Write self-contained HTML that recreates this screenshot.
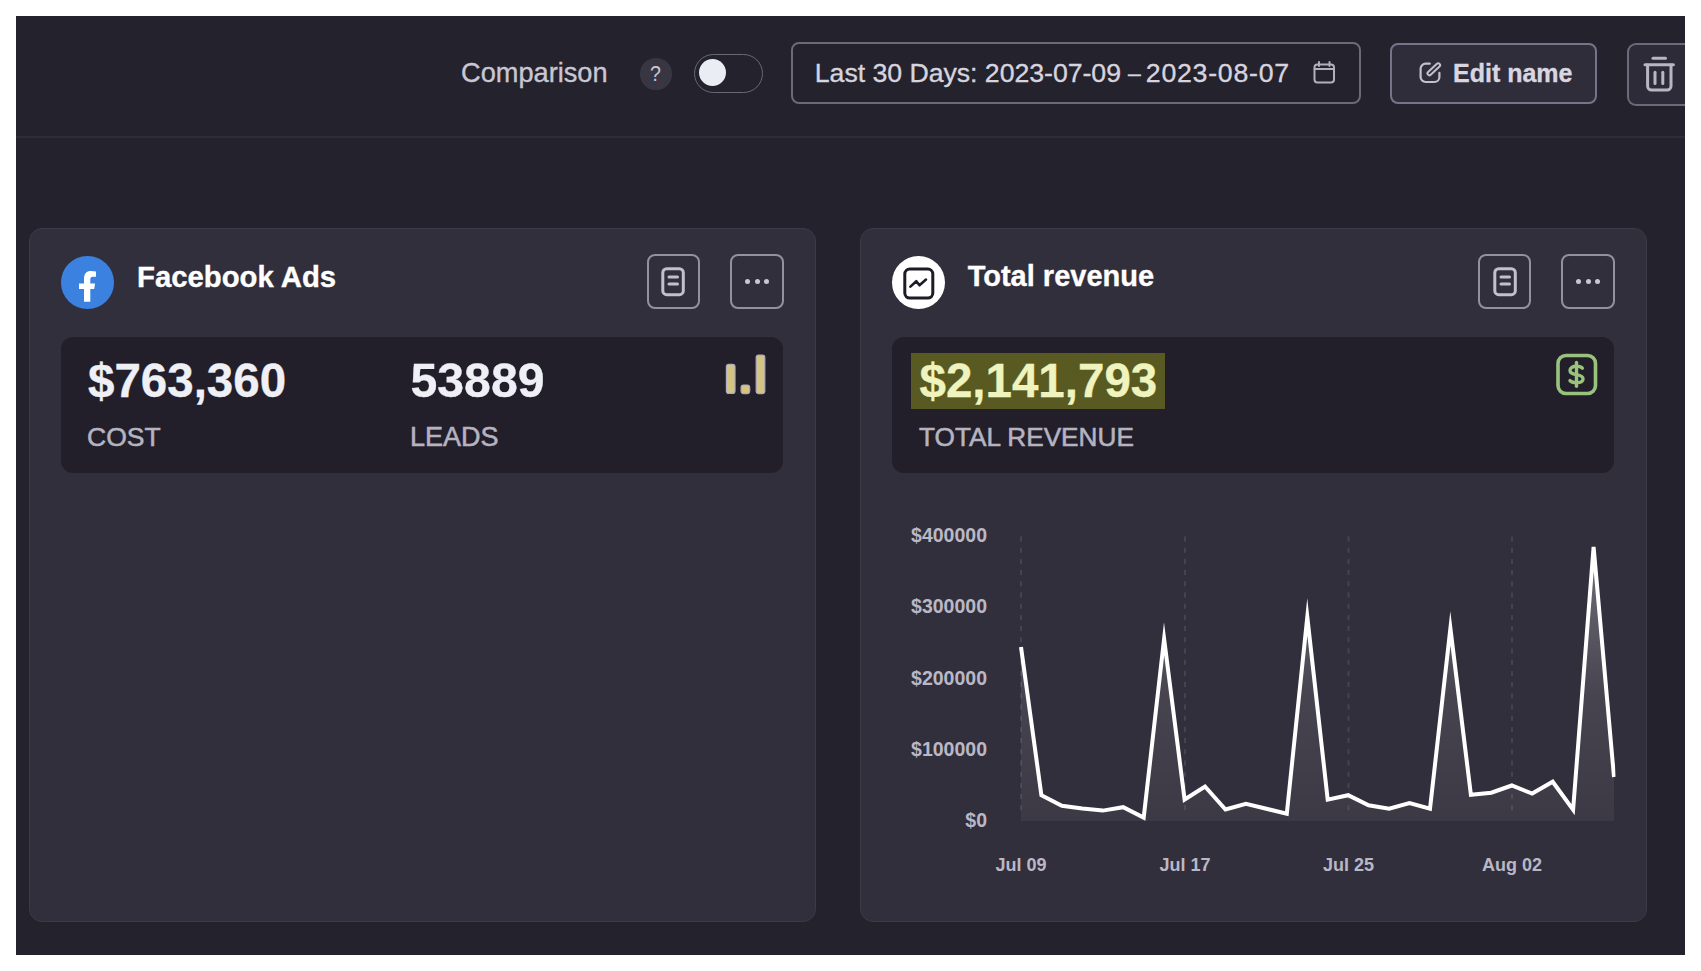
<!DOCTYPE html>
<html><head><meta charset="utf-8">
<style>
html,body{margin:0;padding:0;background:#ffffff;width:1701px;height:971px;overflow:hidden;position:relative;font-family:"Liberation Sans",sans-serif;}
.abs{position:absolute;}
#bg{position:absolute;left:16px;top:16px;width:1669px;height:939px;background:#24222d;overflow:hidden;}
.hline{position:absolute;left:16px;top:136px;width:1669px;height:2px;background:#2f2c39;}
.t{position:absolute;white-space:nowrap;line-height:1;-webkit-text-stroke:0.35px currentColor;}
.btn{position:absolute;box-sizing:border-box;border:2px solid #6c6978;border-radius:8px;}
.card{position:absolute;box-sizing:border-box;background:#322f3c;border:1px solid #3d3a48;border-radius:13px;}
.stats{position:absolute;background:#221f2a;border-radius:12px;}
.ibtn{position:absolute;box-sizing:border-box;border:2px solid #9390a0;border-radius:8px;}
</style></head>
<body>
<div id="bg"></div>
<div class="hline"></div>

<!-- header -->
<div class="t" style="left:461px;top:59.2px;font-size:27.2px;color:#c9c7d3;">Comparison</div>
<div class="abs" style="left:640px;top:58px;width:31.5px;height:31.5px;border-radius:50%;background:#393644;"></div>
<div class="t" style="left:650.1px;top:63px;font-size:22.5px;color:#c9c7d3;-webkit-text-stroke:0;transform:scaleX(0.87);transform-origin:0 0;">?</div>
<div class="abs" style="left:694px;top:54px;width:69px;height:39px;box-sizing:border-box;border:1.6px solid #6a6776;border-radius:20px;"></div>
<div class="abs" style="left:699px;top:59px;width:27px;height:27px;border-radius:50%;background:#ebedf5;"></div>

<div class="btn" style="left:791px;top:42px;width:570px;height:61.5px;"></div>
<div class="t" style="left:814.8px;top:59.8px;font-size:26.7px;letter-spacing:-0.04px;color:#d6d4df;">Last 30 Days: 2023-07-09</div>
<div class="t" style="left:1128px;top:61.5px;font-size:23px;color:#d6d4df;">–</div>
<div class="t" style="left:1145.8px;top:59.8px;font-size:26.7px;letter-spacing:0.75px;color:#d6d4df;">2023-08-07</div>
<svg class="abs" style="left:1312px;top:60px;" width="26" height="26" viewBox="0 0 26 26" fill="none" stroke="#b3b0be" stroke-width="2" stroke-linecap="round">
 <rect x="2.5" y="4.5" width="19.5" height="18" rx="3"/>
 <line x1="2.5" y1="9" x2="22" y2="9"/>
 <line x1="7" y1="2" x2="7" y2="6"/>
 <line x1="17.5" y1="2" x2="17.5" y2="6"/>
</svg>

<div class="btn" style="left:1390px;top:42.5px;width:207px;height:61px;background:#302d3a;border-color:#77748a;"></div>
<svg class="abs" style="left:1417px;top:60px;" width="26" height="26" viewBox="0 0 26 26" fill="none" stroke="#c3c0cd" stroke-width="2.2" stroke-linecap="round" stroke-linejoin="round">
 <path d="M12.8 3.7 H8.6 A5 5 0 0 0 3.6 8.7 V17 A5 5 0 0 0 8.6 22 H17.4 A5 5 0 0 0 22.4 17 V12.8"/>
 <rect x="-7.9" y="-1.9" width="15.8" height="3.8" rx="1.9" stroke-width="2" transform="translate(16.8 9.3) rotate(-43)"/>
</svg>
<div class="t" style="left:1453px;top:60.7px;font-size:25px;font-weight:bold;color:#d8d6e1;">Edit name</div>

<div class="abs" style="left:1627px;top:43px;width:58px;height:62.5px;box-sizing:border-box;border:2px solid #6c6978;border-right:none;border-radius:9px 0 0 9px;background:#2e2b38;"></div>
<svg class="abs" style="left:1640px;top:54px;" width="38" height="40" viewBox="0 0 38 40" fill="none" stroke="#b9b6c4" stroke-width="3" stroke-linecap="round" stroke-linejoin="round">
 <line x1="13" y1="4.2" x2="25.5" y2="4.2"/>
 <line x1="5" y1="10.7" x2="33.4" y2="10.7"/>
 <path d="M7.6 11 V32 A4 4 0 0 0 11.6 36 H27 A4 4 0 0 0 31 32 V11"/>
 <line x1="15" y1="18.3" x2="15" y2="29.5"/>
 <line x1="22.8" y1="18.3" x2="22.8" y2="29.5"/>
</svg>

<!-- left card -->
<div class="card" style="left:29px;top:228px;width:787px;height:694px;"></div>
<div class="abs" style="left:61px;top:256px;width:52.5px;height:52.5px;border-radius:50%;background:#3b82e0;"></div>
<svg class="abs" style="left:61px;top:256px;" width="53" height="53" viewBox="0 0 53 53">
 <path fill="#ffffff" d="M23 45.7 V33 H18 V27.6 H23 V23 C23 17.5 25.5 14.9 30 14.9 C32 14.9 33.5 15.1 35 15.4 V20.8 H32 C30 20.8 29.3 21.8 29.3 23.5 V27.6 H34 L33.2 33 H29.3 V45.7 Z"/>
</svg>
<div class="t" style="left:137px;top:262.1px;font-size:29.3px;font-weight:bold;color:#ffffff;">Facebook Ads</div>

<div class="ibtn" style="left:646.5px;top:254px;width:53px;height:54.5px;"></div>
<svg class="abs" style="left:655px;top:263px;" width="36" height="36" viewBox="0 0 36 36" fill="none" stroke="#c3c0cd" stroke-width="3" stroke-linecap="round">
 <rect x="7.8" y="5.7" width="20.5" height="26" rx="4"/>
 <line x1="14" y1="14" x2="22.5" y2="14"/>
 <line x1="14" y1="21" x2="22.5" y2="21"/>
</svg>
<div class="ibtn" style="left:730px;top:254px;width:54px;height:54.5px;"></div>
<div class="abs" style="left:745px;top:279.2px;width:5px;height:5px;border-radius:50%;background:#c9c7d3;"></div>
<div class="abs" style="left:754.5px;top:279.2px;width:5px;height:5px;border-radius:50%;background:#c9c7d3;"></div>
<div class="abs" style="left:764px;top:279.2px;width:5px;height:5px;border-radius:50%;background:#c9c7d3;"></div>

<div class="stats" style="left:61px;top:336.5px;width:721.5px;height:136px;"></div>
<div class="t" style="left:88px;top:357px;font-size:47.5px;font-weight:bold;color:#eef0f6;">$763,360</div>
<div class="t" style="left:410.5px;top:355.8px;font-size:48.2px;font-weight:bold;color:#eef0f6;">53889</div>
<div class="t" style="left:87px;top:423.6px;font-size:26.5px;color:#b6b3c1;-webkit-text-stroke:0.55px #b6b3c1;">COST</div>
<div class="t" style="left:410px;top:423.9px;font-size:27px;color:#b6b3c1;-webkit-text-stroke:0.55px #b6b3c1;">LEADS</div>
<svg class="abs" style="left:720px;top:350px;" width="50" height="50" viewBox="0 0 50 50">
 <g fill="#d4c481" stroke="#aeadc0" stroke-width="1.2">
  <rect x="6.4" y="14.4" width="8.6" height="29" rx="2.5"/>
  <rect x="21.1" y="35" width="8.6" height="8.6" rx="2.5"/>
  <rect x="36.2" y="5.1" width="8.6" height="38.5" rx="2.5"/>
 </g>
</svg>

<!-- right card -->
<div class="card" style="left:860px;top:228px;width:787px;height:694px;"></div>
<div class="abs" style="left:892px;top:255.5px;width:53px;height:53px;border-radius:50%;background:#ffffff;"></div>
<svg class="abs" style="left:892px;top:255.5px;" width="53" height="53" viewBox="0 0 53 53" fill="none" stroke="#1d1b24" stroke-width="3" stroke-linecap="round" stroke-linejoin="round">
 <rect x="12.8" y="13.1" width="28" height="29" rx="5"/>
 <path stroke-width="2.6" d="M18.4 30.6 L24.3 25.2 L27.5 29.3 L34 23.6"/>
</svg>
<div class="t" style="left:967.7px;top:262.4px;font-size:29px;font-weight:bold;color:#ffffff;">Total revenue</div>

<div class="ibtn" style="left:1478px;top:254px;width:53px;height:54.5px;"></div>
<svg class="abs" style="left:1486.5px;top:263px;" width="36" height="36" viewBox="0 0 36 36" fill="none" stroke="#c3c0cd" stroke-width="3" stroke-linecap="round">
 <rect x="7.8" y="5.7" width="20.5" height="26" rx="4"/>
 <line x1="14" y1="14" x2="22.5" y2="14"/>
 <line x1="14" y1="21" x2="22.5" y2="21"/>
</svg>
<div class="ibtn" style="left:1561px;top:254px;width:54px;height:54.5px;"></div>
<div class="abs" style="left:1576px;top:279.2px;width:5px;height:5px;border-radius:50%;background:#c9c7d3;"></div>
<div class="abs" style="left:1585.5px;top:279.2px;width:5px;height:5px;border-radius:50%;background:#c9c7d3;"></div>
<div class="abs" style="left:1595px;top:279.2px;width:5px;height:5px;border-radius:50%;background:#c9c7d3;"></div>

<div class="stats" style="left:892px;top:336.5px;width:722px;height:136px;"></div>
<div class="abs" style="left:911px;top:353px;width:254px;height:56px;background:#585a22;"></div>
<div class="t" style="left:919.5px;top:356.6px;font-size:47.5px;font-weight:bold;color:#eff4bf;">$2,141,793</div>
<div class="t" style="left:919px;top:423.8px;font-size:26.2px;color:#b6b3c1;-webkit-text-stroke:0.55px #b6b3c1;">TOTAL REVENUE</div>
<svg class="abs" style="left:1553px;top:351px;" width="48" height="48" viewBox="0 0 48 48" fill="none" stroke="#99c37d" stroke-linecap="round" stroke-linejoin="round">
 <rect x="5" y="4.5" width="37.5" height="38" rx="8" stroke-width="3.6"/>
 <path stroke-width="3.4" d="M29.4 17.2 C28.4 15.9 26.2 15.3 23.5 15.3 C19.6 15.3 17 17 17 19.6 C17 22.3 19.5 23 23.5 23.7 C27.5 24.4 30 25.3 30 27.9 C30 30.3 27.5 31.6 23.5 31.6 C20.6 31.6 18.2 31 17 29.6"/>
 <line x1="23.5" y1="11.5" x2="23.5" y2="35.2" stroke-width="3.4"/>
</svg>

<!-- chart -->
<svg class="abs" style="left:0;top:0;" width="1701" height="971" viewBox="0 0 1701 971">
 <defs>
  <linearGradient id="g" x1="0" y1="0" x2="0" y2="1">
   <stop offset="0%" stop-color="#ffffff" stop-opacity="0.30"/>
   <stop offset="25%" stop-color="#ffffff" stop-opacity="0.21"/>
   <stop offset="55%" stop-color="#ffffff" stop-opacity="0.10"/>
   <stop offset="100%" stop-color="#ffffff" stop-opacity="0.05"/>
  </linearGradient>
  <clipPath id="cp"><rect x="1019" y="500" width="596.5" height="322"/></clipPath>
 </defs>
 <g stroke="#46434f" stroke-width="2" stroke-dasharray="5 6.2">
  <line x1="1021" y1="536.5" x2="1021" y2="816"/>
  <line x1="1185" y1="536.5" x2="1185" y2="816"/>
  <line x1="1348.5" y1="536.5" x2="1348.5" y2="816"/>
  <line x1="1512" y1="536.5" x2="1512" y2="816"/>
 </g>
 <g clip-path="url(#cp)">
 <path id="area" fill="url(#g)" d="M1021.0 647 L1041.4 795.3 L1061.9 805.7 L1082.3 808.4 L1102.8 810.6 L1123.2 807.2 L1143.7 817.6 L1164.1 638.8 L1184.6 799.5 L1205.0 786.5 L1225.5 809.5 L1245.9 803.8 L1266.4 808.8 L1286.8 813.7 L1307.3 617 L1327.7 799.6 L1348.2 795.2 L1368.6 805.3 L1389.1 808.8 L1409.5 803.1 L1430.0 808.8 L1450.4 628.4 L1470.9 794.7 L1491.3 792.7 L1511.8 785.5 L1532.2 793.6 L1552.7 781.7 L1573.1 809.7 L1593.6 547 L1614.0 777 L1614 821 L1021 821 Z"/>
 <path fill="none" stroke="#ffffff" stroke-width="4" stroke-linejoin="miter" stroke-miterlimit="10" d="M1021.0 647 L1041.4 795.3 L1061.9 805.7 L1082.3 808.4 L1102.8 810.6 L1123.2 807.2 L1143.7 817.6 L1164.1 638.8 L1184.6 799.5 L1205.0 786.5 L1225.5 809.5 L1245.9 803.8 L1266.4 808.8 L1286.8 813.7 L1307.3 617 L1327.7 799.6 L1348.2 795.2 L1368.6 805.3 L1389.1 808.8 L1409.5 803.1 L1430.0 808.8 L1450.4 628.4 L1470.9 794.7 L1491.3 792.7 L1511.8 785.5 L1532.2 793.6 L1552.7 781.7 L1573.1 809.7 L1593.6 547 L1614.0 777"/>
 </g>
 <g font-family="Liberation Sans" font-weight="bold" font-size="19.5" fill="#bbb8c6" text-anchor="end">
  <text x="987" y="542">$400000</text>
  <text x="987" y="613.3">$300000</text>
  <text x="987" y="684.5">$200000</text>
  <text x="987" y="755.8">$100000</text>
  <text x="987" y="827">$0</text>
 </g>
 <g font-family="Liberation Sans" font-weight="bold" font-size="18" fill="#bbb8c6" text-anchor="middle">
  <text x="1021" y="870.5">Jul 09</text>
  <text x="1185" y="870.5">Jul 17</text>
  <text x="1348.5" y="870.5">Jul 25</text>
  <text x="1512" y="870.5">Aug 02</text>
 </g>
</svg>
</body></html>
